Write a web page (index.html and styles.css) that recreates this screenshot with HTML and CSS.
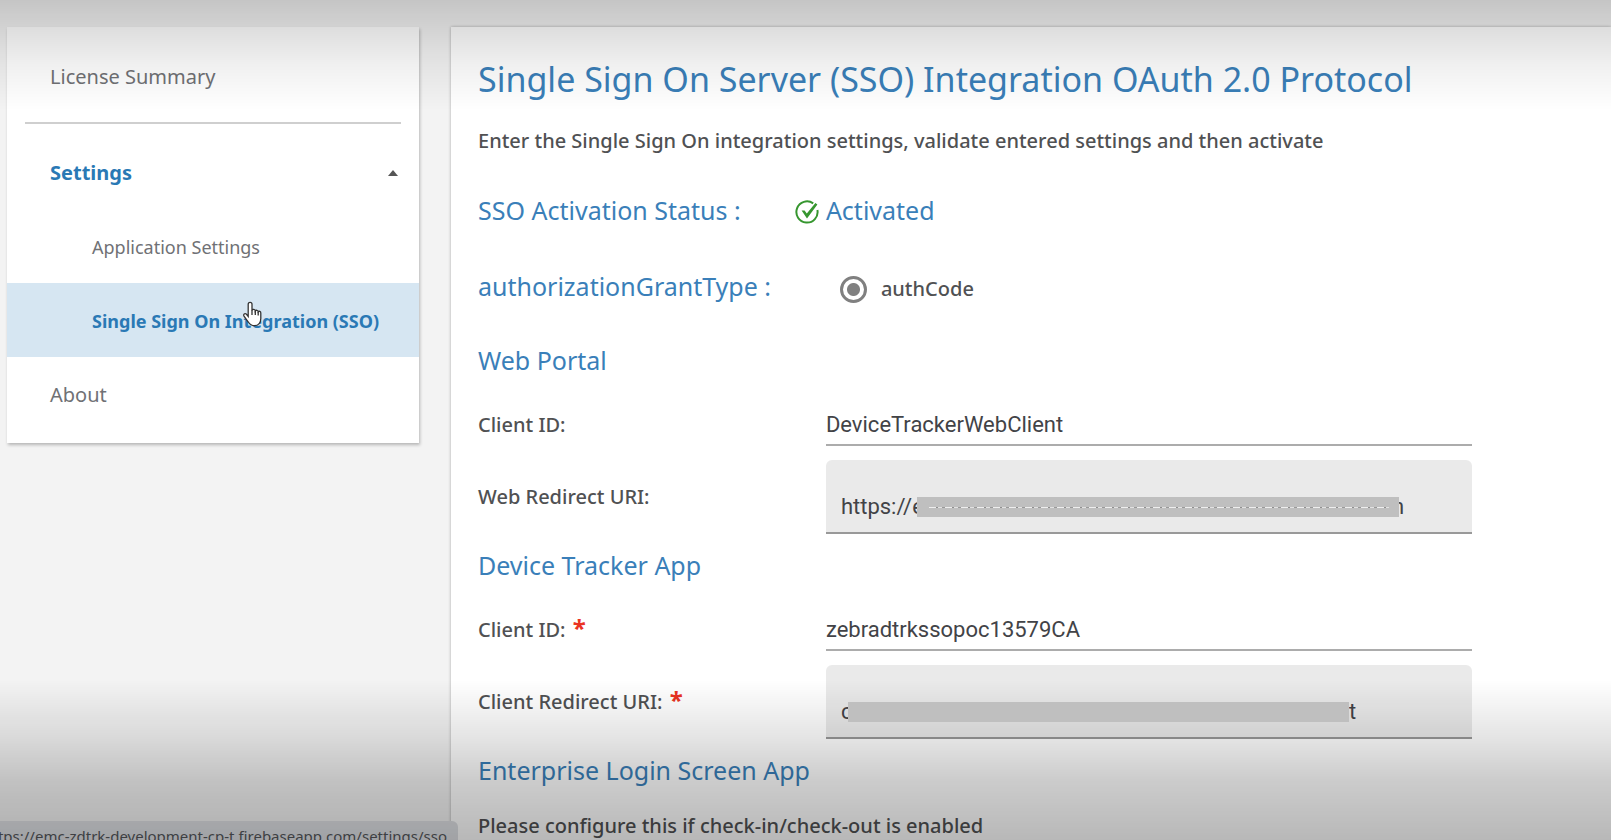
FILE: index.html
```html
<!DOCTYPE html>
<html lang="en">
<head>
<meta charset="utf-8">
<title>Single Sign On Integration</title>
<link rel="stylesheet" href="styles.css">
</head>
<body>
<div class="page">
  <nav class="sidebar">
    <a class="nav-item" href="#">License Summary</a>
    <hr class="divider">
    <button class="nav-item nav-toggle" type="button">Settings<svg class="caret" viewBox="0 0 10 6"><path d="M0 6 5 0l5 6z"/></svg></button>
    <a class="nav-item nav-sub" href="#">Application Settings</a>
    <a class="nav-item nav-sub active" href="#">Single Sign On Integration (SSO)</a>
    <a class="nav-item" href="#">About</a>
  </nav>
  <main class="content">
    <h1>Single Sign On Server (SSO) Integration OAuth 2.0 Protocol</h1>
    <p class="intro">Enter the Single Sign On integration settings, validate entered settings and then activate</p>
    <div class="row status-row">
      <h2>SSO Activation Status :</h2>
      <div class="status">
        <svg class="check" viewBox="0 0 24 24"><path class="ring" d="M18.200 3.400A10.600 10.600 0 1 0 22.400 10"/><path class="tick" d="M6.600 10.400 9.600 10.400l2.200 3.200L20.400 3l2 1.600L12 18.600z"/></svg>
        <span>Activated</span>
      </div>
    </div>
    <div class="row grant-row">
      <h2>authorizationGrantType :</h2>
      <label class="choice"><input class="radio" type="radio" name="grant" checked>authCode</label>
    </div>
    <h2 class="section">Web Portal</h2>
    <div class="row field-row">
      <label for="web-id">Client ID:</label>
      <input class="line-input" id="web-id" type="text" value="DeviceTrackerWebClient">
    </div>
    <div class="row box-row">
      <label for="web-uri">Web Redirect URI:</label>
      <div class="box"><input class="box-input web-start" id="web-uri" type="text" value="https://e" readonly><span class="mask web-mask"></span><span class="tail web-tail">n</span></div>
    </div>
    <h2 class="section">Device Tracker App</h2>
    <div class="row field-row">
      <label for="app-id">Client ID: <span class="req">*</span></label>
      <input class="line-input" id="app-id" type="text" value="zebradtrkssopoc13579CA">
    </div>
    <div class="row box-row">
      <label for="app-uri">Client Redirect URI: <span class="req">*</span></label>
      <div class="box"><input class="box-input app-start" id="app-uri" type="text" value="c" readonly><span class="mask app-mask"></span><span class="tail">t</span></div>
    </div>
    <h2 class="section">Enterprise Login Screen App</h2>
    <p class="note">Please configure this if check-in/check-out is enabled</p>
  </main>
</div>
<div class="link-status"><span>https://emc-zdtrk-development-cp-t.firebaseapp.com/settings/sso</span></div>
<svg class="pointer" viewBox="0 0 20 26"><path d="M6.2 15.5V3.2a1.9 1.9 0 0 1 3.8 0v6.2c.5-1.500 3.200-1.300 3.300.5.700-1.100 2.800-.8 2.900.8.8-.9 2.600-.4 2.600 1.200v5.600c0 4-2.400 7.200-6.300 7.200-3.300 0-4.700-1.300-6.200-3.700l-4.300-5.800c-1.200-1.800.9-3.400 2.300-2.100z"/><path d="M10 9v5M13.300 10v4M16.200 11v3.500"/></svg>
<div class="shade shade-top"></div>
<div class="shade shade-bottom"></div>
</body>
</html>
```
FILE: styles.css
```css
* { box-sizing: border-box; }
html, body { height: 100%; }
body {
  margin: 0;
  overflow: hidden;
  background: #f3f3f3;
  color: #505153;
  font: 20px/28px "Noto Sans", sans-serif;
}
h1, h2, p { margin: 0; font-weight: 400; }
h1, h2 { color: #3a7fb9; }

.page {
  display: flex;
  align-items: flex-start;
  gap: 32px;
  min-height: 100%;
  padding: 27px 0 0 7px;
}
.sidebar {
  flex: 0 0 412px;
  display: flex;
  flex-direction: column;
  padding: 12px 0;
  background: #fff;
  box-shadow: 1px 2px 3px rgba(0, 0, 0, .25);
}
.nav-item {
  display: flex;
  align-items: center;
  justify-content: space-between;
  height: 74px;
  padding: 2px 21px 0 43px;
  border: 0;
  background: none;
  color: #707175;
  font: 20px/28px "Noto Sans", sans-serif;
  text-decoration: none;
}
.nav-toggle { color: #2a79b5; font-weight: 700; }
.nav-sub { padding-left: 85px; font-size: 18px; }
.active { background: #d6e6f2; color: #2a79b5; font-weight: 700; }
.divider {
  height: 2px;
  margin: 9px 18px 11px;
  border: 0;
  background: #cfcfcf;
}
.caret { width: 10px; height: 6px; fill: #555; }

.content {
  flex: 1;
  min-width: 0;
  min-height: 813px;
  padding: 24px 139px 0 27px;
  background: #fff;
  box-shadow: 0 0 3px rgba(0, 0, 0, .3);
  font-weight: 500;
}
h1 { font-size: 34px; line-height: 56px; white-space: nowrap; }
h2 { font-size: 25px; line-height: 36px; white-space: nowrap; }
.intro { margin-top: 20px; font-weight: 500; white-space: nowrap; }
.note { margin-top: 24px; font-weight: 500; }
.row { display: grid; grid-template-columns: 35% 65%; align-items: center; }
.status-row { margin-top: 37px; }
.grant-row { margin-top: 40px; }
.status {
  display: flex;
  align-items: center;
  gap: 7px;
  margin-left: -31px;
  color: #3a7fb9;
  font-size: 25px;
  font-weight: 400;
}
.check { width: 24px; height: 24px; margin-top: 3px; }
.ring { fill: none; stroke: #36962f; stroke-width: 2; }
.tick { fill: #36962f; }
.choice { display: flex; align-items: center; gap: 14px; padding: 6px 0 0 14px; }
.radio {
  appearance: none;
  width: 27px;
  height: 27px;
  margin: 0;
  border: 3px solid #808080;
  border-radius: 50%;
  background: radial-gradient(circle, #808080 6px, #fff 7px);
}
.section { margin-top: 38px; }
.field-row { margin-top: 26px; }
.line-input {
  width: 100%;
  height: 42px;
  padding: 0;
  border: 0;
  border-bottom: 2px solid #acacac;
  background: none;
  color: #424347;
  font: 22px/28px Roboto, sans-serif;
}
.box-row { margin-top: 14px; }
.box-row + .section { margin-top: 13px; }
.box {
  display: flex;
  align-items: center;
  height: 74px;
  padding: 22px 15px 0;
  border-bottom: 2px solid #999;
  border-radius: 6px 6px 0 0;
  background: #eaeaea;
  color: #424347;
  font: 22px/28px Roboto, sans-serif;
}
.box-input {
  padding: 0;
  border: 0;
  background: none;
  color: inherit;
  font: inherit;
}
.web-start { width: 76px; }
.app-start { width: 7px; }
.mask {
  position: relative;
  z-index: 2;
  height: 20px;
  background: #bfbfbf;
}
.web-mask { width: 482px; }
.web-mask::after {
  content: "";
  display: block;
  height: 1px;
  margin: 10px 10px 0 12px;
  background: repeating-linear-gradient(90deg, #eee 0 7px, #8f8f8f 7px 9px, #e2e2e2 9px 13px, #999 13px 16px);
}
.app-mask { width: 501px; }
.tail { font-weight: 400; }
.web-tail { margin-left: -7px; }
.req { margin-left: 2px; color: #ea3323; font-size: 24px; font-weight: 700; line-height: 20px; }

.link-status {
  position: fixed;
  left: 0;
  bottom: 0;
  display: flex;
  justify-content: flex-end;
  width: 458px;
  height: 19px;
  padding: 4px 11px 0;
  overflow: hidden;
  border-radius: 0 6px 0 0;
  background: #dfe1e5;
  color: #55585c;
  font-size: 15px;
  line-height: 22px;
  white-space: nowrap;
}
.pointer {
  position: fixed;
  left: 242px;
  top: 301px;
  width: 20px;
  height: 26px;
  fill: #fff;
  stroke: #333;
  stroke-width: 1.3;
}
.shade { position: fixed; left: 0; right: 0; pointer-events: none; }
.shade-top {
  top: 0;
  height: 110px;
  background: linear-gradient(rgba(0,0,0,.19), rgba(0,0,0,.135) 27px, rgba(0,0,0,.06) 65px, rgba(0,0,0,0));
}
.shade-bottom {
  bottom: 0;
  height: 160px;
  background: linear-gradient(rgba(0,0,0,0), rgba(0,0,0,.11) 60px, rgba(0,0,0,.2) 100px, rgba(0,0,0,.28));
}
```
